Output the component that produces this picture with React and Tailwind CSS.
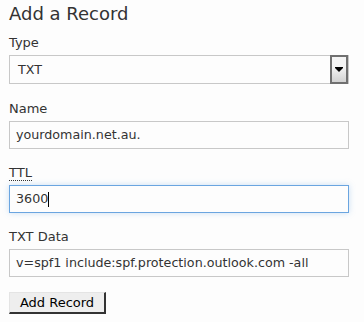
import React from 'react';

const font = { fontFamily: '"DejaVu Sans", Verdana, sans-serif' };

// label + control, spacing taken from the screenshot
const Field = ({ label, children, abbr, top = 'mt-[16px]' }) => (
    <div className={top}>
        <div className="text-[13px] leading-[16px] text-[#333]">
            {abbr ? (
                <span className="border-b border-dotted border-[#333]">{label}</span>
            ) : label}
        </div>
        <div className="mt-[4px]">{children}</div>
    </div>
);

const App = () => {
    return (
        <div className="w-[364px] h-[322px] bg-[#fdfdfd] px-[9px] pt-[4px] text-[#333]" style={font}>
            <h2 className="text-[18px] leading-[20px] text-[#333]">Add a Record</h2>

            <Field label="Type" top="mt-[11px]">
                <div className="h-[29px] w-[340px] border border-[#c8c8c8] bg-[#fdfdfd] flex items-center justify-between">
                    <span className="pl-[8px] text-[12.7px]">TXT</span>
                    <div className="h-[29px] w-[18px] border-2 border-[#707070] bg-gradient-to-b from-[#f4f4f4] from-40% to-[#d2d2d2] flex flex-col items-center justify-center">
                        <div className="w-[8px] h-px bg-black" />
                        <div className="w-0 h-0 border-l-[4px] border-r-[4px] border-t-[4px] border-l-transparent border-r-transparent border-t-black" />
                    </div>
                </div>
            </Field>

            <Field label="Name" top="mt-[17px]">
                <div className="h-[28px] w-[340px] border border-[#c8c8c8] bg-[#fdfdfd] flex items-center pl-[6px] text-[12.7px]">
                    yourdomain.net.au.
                </div>
            </Field>

            <Field label="TTL" abbr>
                <div className="h-[28px] w-[340px] border border-[#6aa5e0] bg-[#fdfdfd] flex items-center pl-[6px] text-[12.7px] shadow-[0_0_6px_rgba(106,165,224,0.35)]">
                    3600<span className="w-px h-[15px] bg-black" />
                </div>
            </Field>

            <Field label="TXT Data">
                <div className="h-[28px] w-[340px] border border-[#c8c8c8] bg-[#fdfdfd] flex items-center pl-[6px] text-[12.7px]">
                    v=spf1 include:spf.protection.outlook.com -all
                </div>
            </Field>

            <button className="mt-[15px] h-[22px] w-[97px] bg-[#eeeeee] border border-t-[#e4e4e4] border-l-[#e4e4e4] border-r-2 border-b-2 border-r-[#333] border-b-[#333] text-[13px] text-black leading-none">
                Add Record
            </button>
        </div>
    );
};

export default App;
